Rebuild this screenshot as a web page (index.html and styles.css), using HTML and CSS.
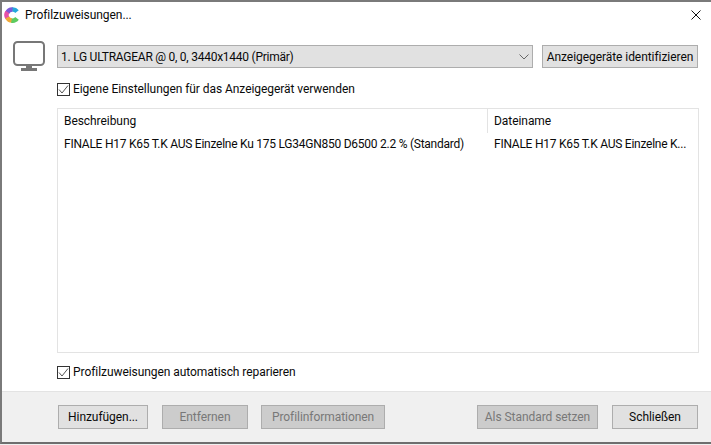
FILE: index.html
```html
<!DOCTYPE html>
<html lang="de">
<head>
<meta charset="utf-8">
<title>Profilzuweisungen...</title>
<link rel="stylesheet" href="styles.css">
</head>
<body>
<div class="window">
  <div class="titlebar">
    <svg class="app-icon" width="16" height="16" viewBox="0 0 16 16">
      <path d="M13 4.600A5.500 5.500 0 0 0 8 2.500" fill="none" stroke="#25a9dc" stroke-width="4.500"/>
      <path d="M8.500 2.500A5.500 5.500 0 0 0 3.200 6" fill="none" stroke="#7d58d8" stroke-width="4.500"/>
      <path d="M3.400 5A5.500 5.500 0 0 0 3.400 11" fill="none" stroke="#e64fa8" stroke-width="4.500"/>
      <path d="M3.200 10.500A5.500 5.500 0 0 0 8 13.500" fill="none" stroke="#f0a838" stroke-width="4.500"/>
      <path d="M7.500 13.500A5.500 5.500 0 0 0 13 11.400" fill="none" stroke="#5ccb5f" stroke-width="4.500"/>
    </svg>
    <span class="title">Profilzuweisungen...</span>
    <svg class="close" width="10" height="10" viewBox="0 0 10 10">
      <path d="M.5.500l9 9M9.500.500l-9 9" stroke="#111" stroke-width="1" fill="none"/>
    </svg>
  </div>
  <div class="content">
    <div class="display-row">
      <svg class="monitor" width="32" height="30" viewBox="0 0 32 30">
        <rect x="1" y="1" width="30" height="23" rx="3.500" fill="none" stroke="#777" stroke-width="2"/>
        <path d="M13 25h6v3h-6z" fill="#777"/>
        <path d="M8 27h16v3H8z" fill="#777"/>
      </svg>
      <div class="combo">
        <span class="tight">1. LG ULTRAGEAR @ 0, 0, 3440x1440 (Primär)</span>
        <svg width="10" height="6" viewBox="0 0 10 6"><path d="M.5.500L5 5 9.500.500" fill="none" stroke="#666"/></svg>
      </div>
      <div class="btn btn-identify">Anzeigegeräte identifizieren</div>
    </div>
    <label class="check check-own">
      <span class="box"><svg width="11" height="11" viewBox="0 0 11 11"><path d="M1 5.500L4 9l6-7.500" fill="none" stroke="#555" stroke-width="1"/></svg></span>
      Eigene Einstellungen für das Anzeigegerät verwenden
    </label>
    <div class="list">
      <div class="list-head">
        <div class="col-a">Beschreibung</div>
        <div class="col-b">Dateiname</div>
      </div>
      <div class="list-row tight">
        <div class="col-a">FINALE H17 K65 T.K AUS Einzelne Ku 175 LG34GN850 D6500 2.2 % (Standard)</div>
        <div class="col-b">FINALE H17 K65 T.K AUS Einzelne K...</div>
      </div>
    </div>
    <label class="check check-repair">
      <span class="box"><svg width="11" height="11" viewBox="0 0 11 11"><path d="M1 5.500L4 9l6-7.500" fill="none" stroke="#555" stroke-width="1"/></svg></span>
      Profilzuweisungen automatisch reparieren
    </label>
  </div>
  <div class="footer">
    <div class="btn w-add">Hinzufügen...</div>
    <div class="btn disabled w-remove">Entfernen</div>
    <div class="btn disabled w-info">Profilinformationen</div>
    <div class="spacer"></div>
    <div class="btn disabled w-default">Als Standard setzen</div>
    <div class="btn w-close">Schließen</div>
  </div>
</div>
</body>
</html>
```
FILE: styles.css
```css
* { box-sizing: border-box; }
html, body { margin: 0; padding: 0; background: #f0f0f0; }
body {
  width: 711px;
  height: 445px;
  overflow: hidden;
  font-family: Roboto, "Noto Sans", sans-serif;
  font-size: 12px;
  letter-spacing: -0.06px;
  color: #0a0a0a;
}
.tight { letter-spacing: -0.25px; }
.window {
  width: 711px;
  height: 444px;
  background: #fff;
  border-top: 2px solid #7a7a7a;
  border-left: 2px solid #7a7a7a;
  border-bottom: 2px solid #6e6e6e;
  display: flex;
  flex-direction: column;
}
.titlebar {
  height: 25px;
  display: flex;
  align-items: center;
  padding: 0 10px 0 2px;
  flex: none;
}
.app-icon { flex: none; }
.title { margin-left: 5px; }
.close { margin-left: auto; }
.content {
  flex: 1;
  padding: 18px 12px 0 11px;
  display: flex;
  flex-direction: column;
  position: relative;
}
.display-row { display: flex; align-items: flex-start; }
.monitor { position: absolute; left: 11px; top: 14px; }
.combo {
  margin-left: 44px;
  width: 476px;
  height: 23px;
  background: #e1e1e1;
  border: 1px solid #adadad;
  display: flex;
  align-items: center;
  justify-content: space-between;
  padding: 0 3px;
}
.btn {
  height: 24px;
  background: #e1e1e1;
  border: 1px solid #adadad;
  display: flex;
  align-items: center;
  justify-content: center;
  flex: none;
}
.btn-identify { margin-left: 9px; width: 156px; height: 23px; }
.check { display: flex; align-items: center; }
.check-own { margin: 13px 0 0 44px; height: 16px; }
.check-repair { margin: 11px 0 0 44px; height: 16px; }
.box {
  width: 13px;
  height: 13px;
  border: 1px solid #333;
  background: #fff;
  margin-right: 3px;
  display: flex;
  align-items: center;
  justify-content: center;
  flex: none;
}
.list {
  margin: 11px 0 0 44px;
  width: 642px;
  height: 245px;
  border: 1px solid #e3e3e3;
}
.list-head { display: flex; height: 24px; align-items: center; }
.list-row { display: flex; height: 21px; align-items: center; }
.col-a { width: 430px; padding-left: 6px; flex: none; white-space: nowrap; }
.col-b { padding-left: 6px; white-space: nowrap; }
.list-head .col-a { height: 100%; display: flex; align-items: center; border-right: 1px solid #e3e3e3; }
.list-head .col-b { height: 100%; display: flex; align-items: center; padding-left: 6px; }
.footer {
  height: 51px;
  flex: none;
  background: #f0f0f0;
  border-top: 1px solid #e3e3e3;
  padding: 13px 13px 0 56px;
  display: flex;
  align-items: flex-start;
}
.disabled { background: #cccccc; color: #787878; }
.spacer { flex: 1; }
.w-add { width: 90px; }
.w-remove { width: 86px; margin-left: 14px; }
.w-info { width: 124px; margin-left: 13px; }
.w-default { width: 121px; }
.w-close { width: 86px; margin-left: 14px; }
```
